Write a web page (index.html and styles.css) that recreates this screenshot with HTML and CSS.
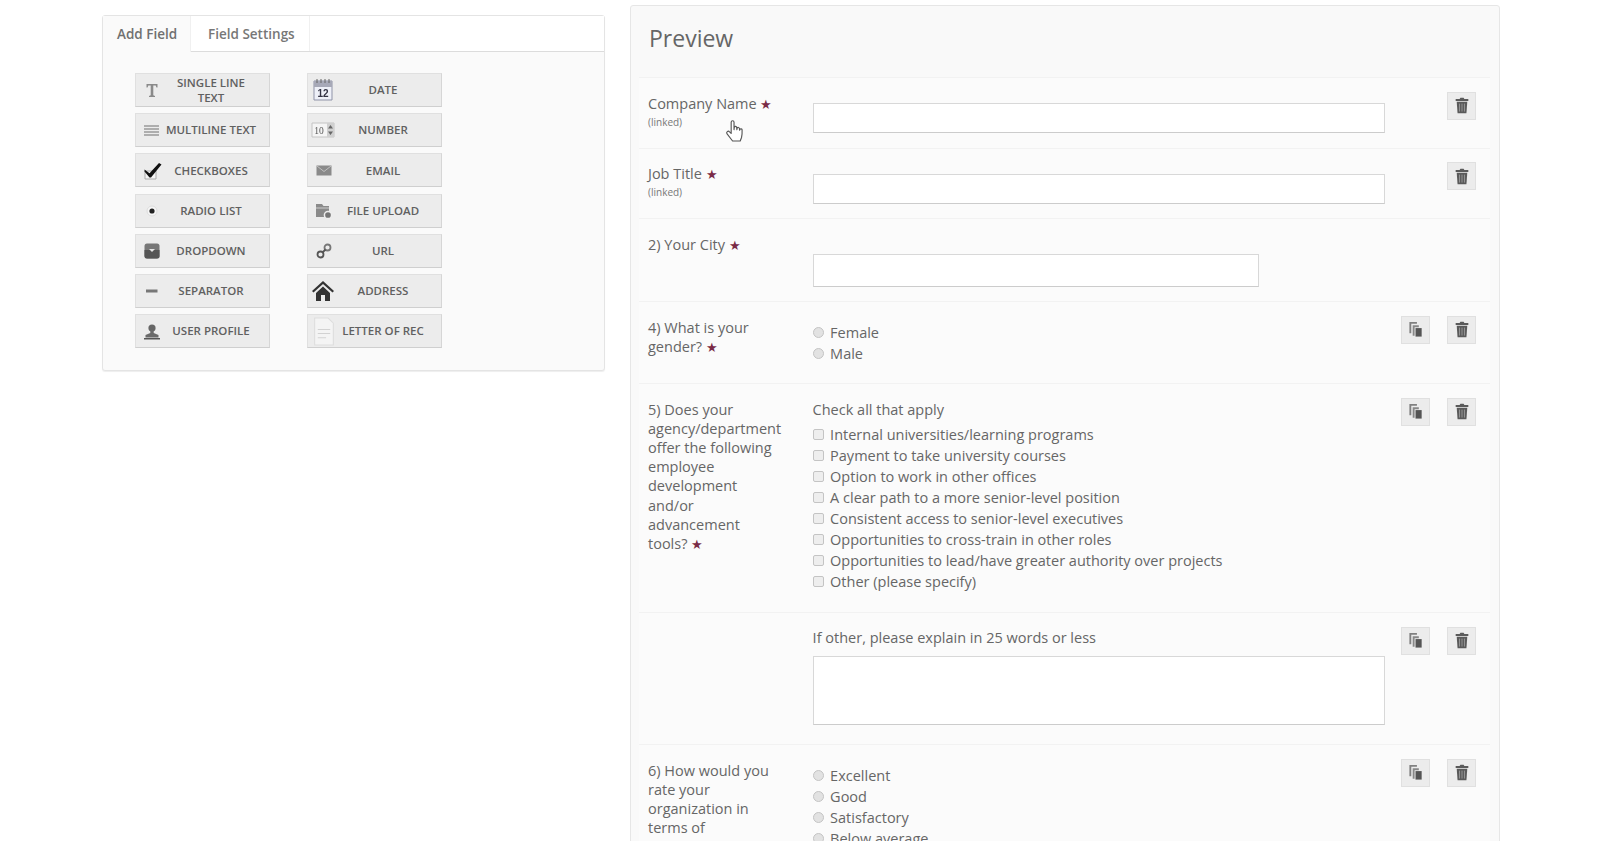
FILE: index.html
```html
<!DOCTYPE html>
<html lang="en">
<head>
<meta charset="utf-8">
<title>Form builder</title>
<link rel="stylesheet" href="styles.css">
</head>
<body>
<svg class="defs" width="0" height="0" aria-hidden="true">
  <symbol id="trash" viewBox="0 0 16 18">
    <path d="M5.500 2.200 6.300.8h3.400l.8 1.400h4.200v2H1.300v-2z" fill="#5a5a5a"/>
    <path d="M2.400 5h11.200l-.9 12.200H3.300z" fill="#5a5a5a"/>
    <path d="M5.400 7v8.400M8 7v8.400M10.600 7v8.400" stroke="#999" stroke-width="1"/>
  </symbol>
  <symbol id="copy" viewBox="0 0 16 18">
    <path d="M1 1h8v2H3v10H1z" fill="#808080"/>
    <path d="M4.500 4.500H11v2H6.500v9h-2z" fill="#888"/>
    <path d="M7.500 7.500H14V16.500H7.500z" fill="#555"/>
  </symbol>
</svg>
<main class="page">
  <aside class="tools">
    <div class="tabs">
      <div class="tab tab-active">Add Field</div>
      <div class="tab">Field Settings</div>
    </div>
    <div class="tool-grid">
      <div class="tool"><svg class="tool-icon" viewBox="0 0 20 20"><path d="M4.500 4h11v3.500h-1l-.8-2H11.300v9.700l1.700.8V17H7v-1l1.700-.8V5.500H6.300l-.8 2h-1z" fill="#8a8a8a"/></svg><span>Single line text</span></div>
      <div class="tool"><svg class="tool-icon tool-icon-wide" viewBox="0 0 24 24"><path d="M3 3h18v19H3z" fill="#eef0f8" stroke="#8f93a8"/><path d="M3 3h18v6H3z" fill="#a7a9b8"/><path d="M6 1v4M10 1v4M14 1v4M18 1v4" stroke="#666"/><text x="12" y="19" class="ico-num">12</text></svg><span>Date</span></div>
      <div class="tool"><svg class="tool-icon" viewBox="0 0 20 20"><path d="M2 6h15M2 9h15M2 12h15M2 15h15" stroke="#999" stroke-width="1.300"/></svg><span>Multiline text</span></div>
      <div class="tool"><svg class="tool-icon tool-icon-wide" viewBox="0 0 24 24"><path d="M1 5h22v14H1z" fill="#f5f5f5" stroke="#c4c4c4"/><text x="8" y="16" class="ico-ten">10</text><path d="M16 5h7v14h-7z" fill="#d0d0d0"/><path d="m19.500 7 2.500 3.500h-5zm0 10-2.500-3.500h5z" fill="#666"/></svg><span>Number</span></div>
      <div class="tool"><svg class="tool-icon" viewBox="0 0 20 20"><path d="M3 11h11v8H3z" fill="#f4f4f4" stroke="#aaa"/><path d="m2.500 9.500 5 3.800L17 3l2.500 1.500-10.500 13H7.500l-5-6z" fill="#111"/></svg><span>Checkboxes</span></div>
      <div class="tool"><svg class="tool-icon" viewBox="0 0 20 20"><path d="M2.500 5.500h15v10h-15z" fill="#8a8a8a"/><path d="m3 6 7 5.500L17 6" fill="none" stroke="#c0c0c0"/></svg><span>Email</span></div>
      <div class="tool"><svg class="tool-icon" viewBox="0 0 20 20"><circle cx="10" cy="10" r="5" fill="#f6f6f6" stroke="#ddd"/><circle cx="10" cy="10" r="2.600" fill="#222"/></svg><span>Radio list</span></div>
      <div class="tool"><svg class="tool-icon" viewBox="0 0 20 20"><path d="M2 3h6l1.500 2H15v11H2z" fill="#8a8a8a"/><path d="M2 7h13" stroke="#ccc"/><circle cx="14" cy="14" r="3.600" fill="#777" stroke="#eee" stroke-width="1.500"/></svg><span>File upload</span></div>
      <div class="tool"><svg class="tool-icon" viewBox="0 0 20 20"><rect x="2.500" y="2.500" width="15" height="15" rx="2.500" fill="#777"/><path d="M2.500 9h15v6a2.500 2.500 0 0 1-2.500 2.500H5A2.500 2.500 0 0 1 2.500 15z" fill="#555"/><path d="M7 8h6l-3 3z" fill="#e4e4e4"/></svg><span>Dropdown</span></div>
      <div class="tool"><svg class="tool-icon" viewBox="0 0 20 20"><circle cx="6.500" cy="13.500" r="3" fill="none" stroke="#555" stroke-width="1.800"/><circle cx="13.500" cy="6.500" r="3" fill="none" stroke="#777" stroke-width="1.800"/><path d="m8.500 11.500 3-3" stroke="#555" stroke-width="1.800"/></svg><span>URL</span></div>
      <div class="tool"><svg class="tool-icon" viewBox="0 0 20 20"><path d="M4 10h11.500" stroke="#777" stroke-width="3"/></svg><span>Separator</span></div>
      <div class="tool"><svg class="tool-icon tool-icon-wide" viewBox="0 0 24 24"><path d="M12 2 1 12l1.500 1.500L12 5l9.500 8.500L23 12z" fill="#333"/><path d="M5 14 12 7.500 19 14v8h-5v-6h-4v6H5z" fill="#333"/></svg><span>Address</span></div>
      <div class="tool"><svg class="tool-icon" viewBox="0 0 20 20"><circle cx="10" cy="7" r="3.600" fill="#666"/><path d="M8.300 9h3.400v3l4.800 2v2.500h-13V14l4.800-2z" fill="#6a6a6a"/><path d="M2 17h16v1.500H2z" fill="#555"/></svg><span>User profile</span></div>
      <div class="tool"><svg class="tool-icon tool-icon-tall" viewBox="0 0 20 28"><path d="M1 1h13l5 5v21H1z" fill="#f4f4f4" stroke="#ddd"/><path d="M4 12h12M4 16h12M4 20h8" stroke="#d2d2d2"/></svg><span>Letter of rec</span></div>
    </div>
  </aside>

  <section class="preview">
    <h1 class="preview-title">Preview</h1>

    <div class="row">
      <div class="label">Company Name <span class="req">★</span><small>(linked)</small></div>
      <div class="field field-input"><div class="input"></div></div>
      <div class="actions"><button class="act"><svg><use href="#trash"/></svg></button></div>
    </div>

    <div class="row">
      <div class="label">Job Title <span class="req">★</span><small>(linked)</small></div>
      <div class="field field-input"><div class="input"></div></div>
      <div class="actions"><button class="act"><svg><use href="#trash"/></svg></button></div>
    </div>

    <div class="row row-city">
      <div class="label">2) Your City <span class="req">★</span></div>
      <div class="field field-city"><div class="input input-short"></div></div>
      <div class="actions"></div>
    </div>

    <div class="row">
      <div class="label">4) What is your gender? <span class="req">★</span></div>
      <div class="field field-options">
        <div class="opt"><i class="radio"></i>Female</div>
        <div class="opt"><i class="radio"></i>Male</div>
      </div>
      <div class="actions"><button class="act"><svg><use href="#copy"/></svg></button><button class="act"><svg><use href="#trash"/></svg></button></div>
    </div>

    <div class="row">
      <div class="label">5) Does your agency/department offer the following employee development and/or advancement<br>tools? <span class="req">★</span></div>
      <div class="field field-checks">
        <div class="hint">Check all that apply</div>
        <div class="opt"><i class="check"></i>Internal universities/learning programs</div>
        <div class="opt"><i class="check"></i>Payment to take university courses</div>
        <div class="opt"><i class="check"></i>Option to work in other offices</div>
        <div class="opt"><i class="check"></i>A clear path to a more senior-level position</div>
        <div class="opt"><i class="check"></i>Consistent access to senior-level executives</div>
        <div class="opt"><i class="check"></i>Opportunities to cross-train in other roles</div>
        <div class="opt"><i class="check"></i>Opportunities to lead/have greater authority over projects</div>
        <div class="opt"><i class="check"></i>Other (please specify)</div>
      </div>
      <div class="actions"><button class="act"><svg><use href="#copy"/></svg></button><button class="act"><svg><use href="#trash"/></svg></button></div>
    </div>

    <div class="row row-text">
      <div class="label"></div>
      <div class="field field-area">
        <div class="hint">If other, please explain in 25 words or less</div>
        <div class="input textarea"></div>
      </div>
      <div class="actions"><button class="act"><svg><use href="#copy"/></svg></button><button class="act"><svg><use href="#trash"/></svg></button></div>
    </div>

    <div class="row">
      <div class="label">6) How would you rate your organization in terms of development opportunities? <span class="req">★</span></div>
      <div class="field field-options">
        <div class="opt"><i class="radio"></i>Excellent</div>
        <div class="opt"><i class="radio"></i>Good</div>
        <div class="opt"><i class="radio"></i>Satisfactory</div>
        <div class="opt"><i class="radio"></i>Below average</div>
      </div>
      <div class="actions"><button class="act"><svg><use href="#copy"/></svg></button><button class="act"><svg><use href="#trash"/></svg></button></div>
    </div>
  </section>
</main>
<svg class="cursor" viewBox="0 0 20 26" aria-hidden="true"><path d="M6.500 15V3.200a1.500 1.500 0 0 1 3 0V11l.3-2.500a1.300 1.300 0 0 1 2.500.2l.2 2.300.3-1.600a1.300 1.300 0 0 1 2.400.3l.2 2 .4-1a1.200 1.200 0 0 1 2.200.6c.1 3 0 6-.6 8l-1.400 3.700H8l-5.800-7.500a1.700 1.700 0 0 1 2.600-2.200z" fill="#fff" stroke="#555" stroke-width="1.200" stroke-linejoin="round"/></svg>
</body>
</html>
```

FILE: styles.css
```css
* { box-sizing: border-box; }
html, body { margin: 0; height: 100%; overflow: hidden; background: #fff; }
body {
  font-family: "Open Sans", sans-serif;
  font-size: 14.500px;
  line-height: 19.200px;
  color: #666;
  position: relative;
}
.defs { position: absolute; }
.page {
  display: flex;
  align-items: flex-start;
  padding-left: 102px;
  gap: 25px;
  filter: blur(0.6px);
}

/* left panel */
.tools {
  width: 503px;
  height: 356px;
  margin-top: 15px;
  background: #fafafa;
  border: 1px solid #e4e4e4;
  border-radius: 3px;
  box-shadow: 0 1px 1px #eee;
}
.tabs {
  display: flex;
  height: 36px;
  background: #fff;
  border-bottom: 1px solid #dcdcdc;
}
.tab {
  height: 35px;
  padding: 9px 14px 0 17px;
  font-size: 13.500px;
  font-weight: 600;
  color: #777;
  white-space: nowrap;
  border-right: 1px solid #f0f0f0;
}
.tab-active {
  flex: none;
  width: 88px;
  height: 36px;
  margin-bottom: -1px;
  padding-left: 14px;
  color: #707070;
  background: #fafafa;
}
.tool-grid {
  display: grid;
  grid-template-columns: 135px 135px;
  grid-auto-rows: 34px;
  column-gap: 37px;
  row-gap: 6.200px;
  padding: 21px 0 0 32px;
}
.tool {
  position: relative;
  display: flex;
  align-items: center;
  justify-content: center;
  padding-left: 17px;
  background: #ececec;
  border: 1px solid #e0e0e0;
  border-bottom-color: #cfcfcf;
  border-right-color: #d6d6d6;
  font-size: 11.500px;
  line-height: 15.500px;
  font-weight: 600;
  color: #606060;
  text-align: center;
  text-transform: uppercase;
}
.tool span { width: 88px; }
.tool:nth-child(3) span, .tool:nth-child(13) span, .tool:nth-child(14) span { width: auto; white-space: nowrap; }
.tool-icon {
  position: absolute;
  left: 6px;
  top: 6px;
  width: 20px;
  height: 20px;
}
.tool-icon-wide { left: 3px; top: 3px; width: 24px; height: 26px; }
.tool-icon-tall { left: 5px; top: 2px; width: 22px; height: 29px; }
.ico-num { font: 700 10px "Liberation Sans", sans-serif; fill: #334; text-anchor: middle; }
.ico-ten { font: 400 9.500px "Liberation Serif", serif; fill: #555; text-anchor: middle; }

/* preview */
.preview {
  width: 870px;
  height: 1100px;
  margin-top: 5px;
  padding: 0 9px 0 8px;
  background: #f9f9f9;
  border: 1px solid #e6e6e6;
  border-radius: 3px;
}
.preview-title {
  height: 71px;
  margin: 0;
  padding: 17px 0 0 10px;
  font-size: 23px;
  line-height: 30px;
  font-weight: 400;
  color: #666;
}
.row {
  display: flex;
  border-top: 1px solid #f2f2f2;
  background: #fbfbfb;
  padding-left: 9px;
}
.label {
  flex: none;
  width: 164.600px;
  padding: 15.500px 29.500px 0 0;
}
.label small {
  display: block;
  font-size: 10px;
  line-height: 18px;
  color: #777;
}
.req { color: #7a2b46; font-size: 13px; line-height: 1; }
.field { flex: none; width: 572px; }
.field-input { padding: 25px 0 14.500px; }
.field-city { padding: 35px 0 14px; }
.field-options { padding: 20px 0 19px; }
.field-checks { padding: 16px 0 19.800px; }
.field-area { padding: 14.500px 0 19px; }
.input {
  height: 30px;
  background: #fff;
  border: 1px solid #d8d8d8;
  border-bottom-color: #ccc;
}
.input-short { width: 446px; height: 33px; }
.textarea { height: 69.500px; margin-top: 9px; }
.hint { margin-bottom: 5px; }
.opt { display: flex; align-items: center; height: 21px; }
.radio, .check {
  flex: none;
  width: 11px;
  height: 11px;
  margin-right: 6.500px;
  background: #e2e2e2;
  border: 1px solid #c4c4c4;
}
.radio { border-radius: 50%; }
.check { border-radius: 2px; background: #eee; }
.actions {
  flex: 1;
  display: flex;
  justify-content: flex-end;
  align-items: flex-start;
  gap: 17px;
  padding: 13.500px 14px 0 0;
}
.act {
  display: flex;
  align-items: center;
  justify-content: center;
  width: 29px;
  height: 28px;
  padding: 0;
  background: #ececec;
  border: 1px solid #e0e0e0;
}
.act svg { width: 16px; height: 17px; }
.cursor {
  position: absolute;
  left: 725px;
  top: 119px;
  width: 19px;
  height: 25px;
  filter: blur(0.4px);
}
```
